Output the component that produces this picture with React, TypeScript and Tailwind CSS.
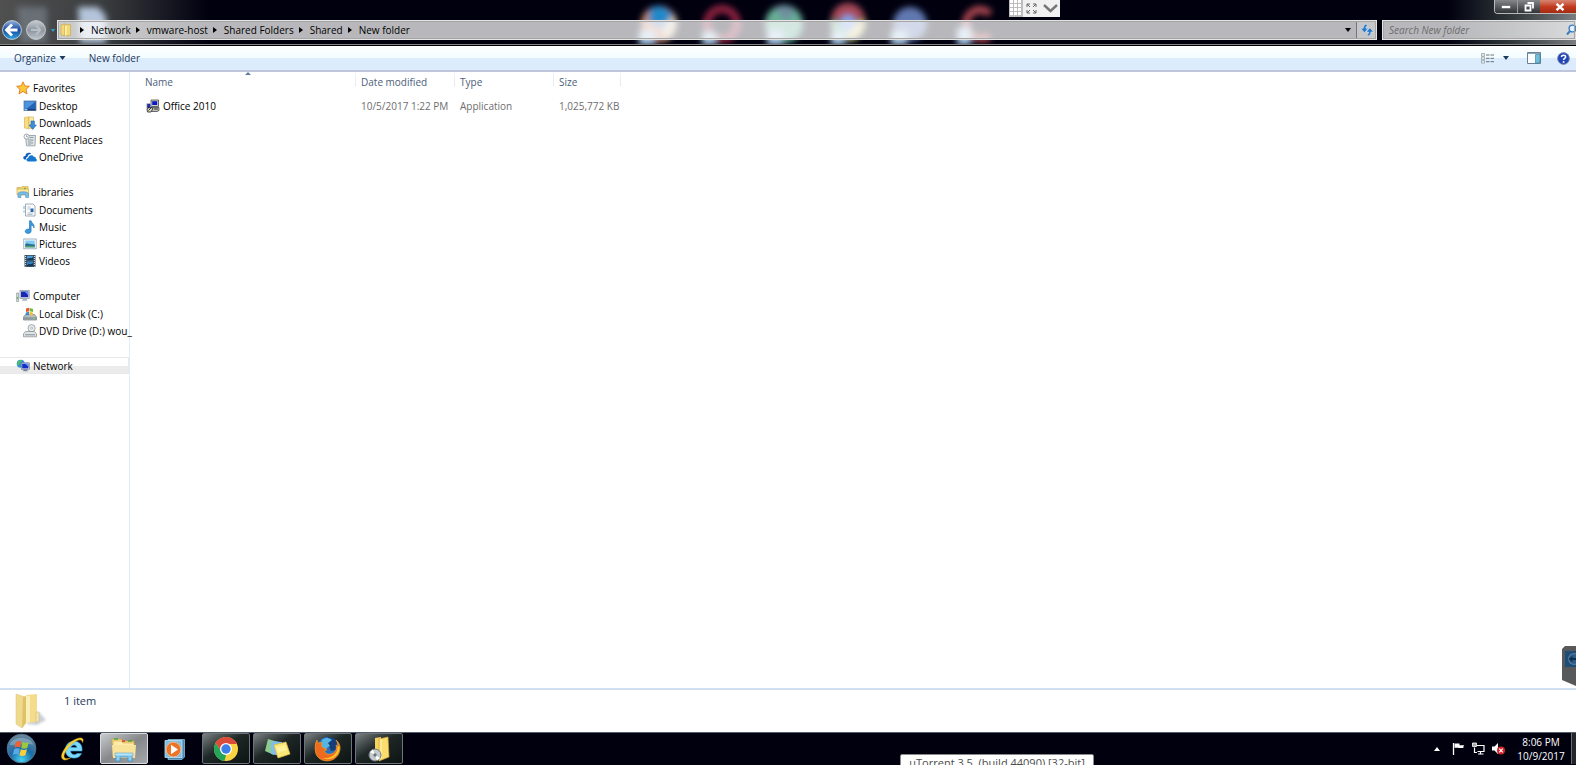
import React from "react";

type IconName =
  | "star" | "desktop" | "downloads" | "recent" | "onedrive" | "libraries" | "documents"
  | "music" | "pictures" | "videos" | "computer" | "disk" | "dvd" | "network";

const drawings: Record<IconName, React.ReactNode> = {
  star: (
    <path d="M7 .8 8.9 4.9 13.4 5.3 10 8.3 11 12.9 7 10.4 3 12.9 4 8.3 .6 5.3 5.1 4.9Z" fill="#ffc83a" stroke="#e07a1c" strokeWidth=".9" strokeLinejoin="round" />
  ),
  desktop: (
    <g>
      <rect x="1" y="2" width="12" height="9.5" fill="#2563b4" stroke="#5f7e9e" strokeWidth=".8" />
      <path d="M1.4 2.4h11.2L4 9.5 1.4 10Z" fill="#4d94dc" />
      <path d="M1.4 10h11.2v1.4H1.4Z" fill="#1b3f78" />
      <path d="M1.4 10h3v1.4h-3Z" fill="#8fd0e8" />
    </g>
  ),
  downloads: (
    <g>
      <path d="M1.500 1.500 6 .8v12L1.500 12Z" fill="#f7dd7c" stroke="#d3ab45" strokeWidth=".6" />
      <path d="M6 1h4.500v11.300H6Z" fill="#fbebaa" stroke="#d3ab45" strokeWidth=".6" />
      <path d="M8 5h3.400v4h2L9.700 13.400 6 9h2Z" fill="#3b8fd6" stroke="#2566ad" strokeWidth=".6" />
    </g>
  ),
  recent: (
    <g>
      <path d="M2.500 2.500H12.500l-.5 10.300H3.500Z" fill="#dde4e7" stroke="#8c979e" strokeWidth=".8" />
      <circle cx="3.600" cy="3.600" r="2.600" fill="#f6f9fa" stroke="#8c979e" strokeWidth=".8" />
      <path d="M3.600 2.200v1.600h1.200M7 4.500h3.500M5 7h5.500M5 9h3M9 8.500v2.500M5 11h3" stroke="#7b8992" strokeWidth=".8" fill="none" />
    </g>
  ),
  onedrive: (
    <g>
      <path d="M1.500 9.500C-.6 8.800.1 5.800 2.400 5.900 2.600 2.900 6.600 1.800 8.400 4.100 6 3.900 4.700 5.300 4.500 7 3 7.200 2.700 8.700 3.300 9.600Z" fill="#0f5fb8" />
      <path d="M5 11.500C2.800 11.300 3 8.200 5.200 8.100 5.300 5.100 9.400 4.100 10.700 6.700 12.300 6.300 13.100 7.700 12.700 8.700 14.500 9.200 14.100 11.500 12.500 11.500Z" fill="#1677d2" />
    </g>
  ),
  libraries: (
    <g>
      <path d="M1 2.500h4l1-1h6v3H1Z" fill="#f5d66d" stroke="#c8a446" strokeWidth=".6" />
      <path d="M1 4h11.500v6H1Z" fill="#fbe89a" stroke="#c8a446" strokeWidth=".6" />
      <path d="M2 12.500V8.500C2.300 6.300 11.600 6.300 12.500 8.500v4h-2.800V9.600H4.900v2.900Z" fill="#77bfe8" stroke="#4b8fc0" strokeWidth=".6" />
      <circle cx="9" cy="3.500" r=".8" fill="#4b9c4b" />
    </g>
  ),
  documents: (
    <g>
      <path d="M2.500 1H10l2 2v10H2.500Z" fill="#fafcfe" stroke="#8997a5" strokeWidth=".8" />
      <path d="M4.500 4h3M4.500 6h2.500M4.500 10h5.500M4.500 11.500h5" stroke="#9aa9b7" strokeWidth=".7" />
      <path d="M7.500 5.500h3V9h-3Z" fill="#2867b0" />
      <path d="M1 3v3M1 7.500v2" stroke="#6296c6" strokeWidth=".8" />
    </g>
  ),
  music: (
    <path d="M6.500.8h1.600C8.600 3.300 12 4.200 11 8c-.4-2-1.500-2.700-2.900-3.100V11c0 1.700-1.300 2.400-3 2.400S2.200 12.600 2.200 11.300s1.500-2.600 4.300-2.200Z" fill="#3a9be0" stroke="#1b69b0" strokeWidth=".6" />
  ),
  pictures: (
    <g>
      <rect x=".8" y="2" width="12.400" height="9.800" fill="#fafcff" stroke="#8ea0b1" strokeWidth=".8" />
      <rect x="2.300" y="3.500" width="9.400" height="6.800" fill="#82c9ef" />
      <path d="M2.300 7c3-1.500 5 1 9.400.3v3H2.300Z" fill="#246c9a" />
      <path d="M2.300 9c3 0 5-.6 9.400.4v.9H2.300Z" fill="#54a05e" />
    </g>
  ),
  videos: (
    <g>
      <rect x="1.500" y="1" width="11" height="12" fill="#3d4d5c" />
      <path d="M2.600 2v10.500M11.400 2v10.500" stroke="#dbe4ea" strokeWidth="1" strokeDasharray="1 1" />
      <rect x="4" y="1.800" width="6" height="4.700" fill="#4b9ed8" />
      <rect x="4" y="7.500" width="6" height="4.700" fill="#3482bd" />
      <path d="M4 5c2-2 4 0 6-2v3.500H4ZM4 11c2-2 4 0 6-2v3.200H4Z" fill="#153a5b" />
    </g>
  ),
  computer: (
    <g>
      <path d="M.6 4h2v8.500h-2Z" fill="#d6dde0" stroke="#7c8a8d" strokeWidth=".6" />
      <path d="M1.600 8v2" stroke="#57b04d" strokeWidth="1" />
      <rect x="4" y="1.500" width="9.200" height="7.800" fill="#d8dee6" stroke="#75808f" strokeWidth=".6" />
      <rect x="5" y="2.500" width="7.200" height="5.700" fill="#1828b4" />
      <path d="M8.500 2.500h3.700v3.700Z" fill="#6f90f0" />
      <path d="M7.300 9.300h2.800l1.500 2.400H5.800Z" fill="#aab2bc" />
    </g>
  ),
  disk: (
    <g>
      <path d="M2.500 7.500h9l2 2.500v3H.5v-3Z" fill="#b8bfc4" stroke="#737b80" strokeWidth=".7" />
      <path d="M.8 10.200h12.400v2.500H.8Z" fill="#8f999f" />
      <path d="M10 11.500h2" stroke="#5be05b" strokeWidth="1" />
      <path d="M3 1.500 6.200.8v3.400L3 5Z" fill="#e8542a" />
      <path d="M6.700.9 10 2v3L6.700 4.200Z" fill="#6fb83c" />
      <path d="M2.800 5.500 6 4.700V8L2.800 8.500Z" fill="#3a8ad4" />
      <path d="M6.500 4.700 9.800 5.500v3L6.500 8Z" fill="#f6c02d" />
    </g>
  ),
  dvd: (
    <g>
      <circle cx="8.600" cy="4.200" r="3.600" fill="#e9eef0" stroke="#8b9499" strokeWidth=".8" />
      <circle cx="8.600" cy="4.200" r="1" fill="#fff" stroke="#8b9499" strokeWidth=".6" />
      <path d="M2.500 7.500h9l2 2.300v3H.5v-3Z" fill="#dfe3e5" stroke="#7d868b" strokeWidth=".7" />
      <path d="M2 10.800h10" stroke="#7d868b" strokeWidth=".9" />
    </g>
  ),
  network: (
    <g>
      <circle cx="4.700" cy="4.700" r="4" fill="#2f92d8" />
      <path d="M1.500 2.700C3 .8 5 .6 6 1.300 5.500 3 4 3 3.500 5 3 7 1.700 6.500 1 5.500Z" fill="#50bb68" />
      <rect x="5.300" y="3.800" width="8" height="6.500" fill="#d4dae6" stroke="#6a7487" strokeWidth=".6" />
      <rect x="6.200" y="4.700" width="6.200" height="4.700" fill="#1230c4" />
      <path d="M9 4.700h3.400v3Z" fill="#6a9bf5" />
      <path d="M8 10.300h2.700l1.300 2H6.800Z" fill="#7d8796" />
    </g>
  ),
};

function Icon({ name }: { name: IconName }) {
  return (
    <svg viewBox="0 0 14 14" className="size-[14px] shrink-0" aria-hidden="true">
      {drawings[name]}
    </svg>
  );
}

type NavGroup = { label: string; icon: IconName; items: { label: string; icon: IconName }[] };

const groups: NavGroup[] = [
  {
    label: "Favorites",
    icon: "star",
    items: [
      { label: "Desktop", icon: "desktop" },
      { label: "Downloads", icon: "downloads" },
      { label: "Recent Places", icon: "recent" },
      { label: "OneDrive", icon: "onedrive" },
    ],
  },
  {
    label: "Libraries",
    icon: "libraries",
    items: [
      { label: "Documents", icon: "documents" },
      { label: "Music", icon: "music" },
      { label: "Pictures", icon: "pictures" },
      { label: "Videos", icon: "videos" },
    ],
  },
  {
    label: "Computer",
    icon: "computer",
    items: [
      { label: "Local Disk (C:)", icon: "disk" },
      { label: "DVD Drive (D:) wou_", icon: "dvd" },
    ],
  },
];

function Caret({ className }: { className: string }) {
  return (
    <svg viewBox="0 0 6 4" className={className} aria-hidden="true">
      <path d="M0 0h6L3 4Z" fill="currentColor" />
    </svg>
  );
}

function Glass() {
  return (
    <div className="pointer-events-none absolute inset-0 overflow-hidden" aria-hidden="true">
      <div className="absolute inset-y-0 left-0 w-52 bg-linear-to-r from-[#505050] via-[#3a3d3f] to-transparent" />
      <div className="absolute inset-y-0 right-0 w-32 bg-linear-to-l from-[#7b7e80] via-[#30383a] to-transparent" />
      <svg className="absolute left-0 top-0 h-[45px] w-[1100px]" viewBox="0 0 1100 45">
        <defs>
          <filter id="soft" x="-20%" y="-20%" width="140%" height="140%">
            <feGaussianBlur stdDeviation="3" />
          </filter>
        </defs>
        <g filter="url(#soft)">
          <path d="M17 7h30v36H20Z" fill="#8793a0" opacity=".5" />
          <path d="M78 7h20l8 9v27H80Z" fill="#b4c4da" />
          <circle cx="659" cy="24" r="18" fill="#c98a6a" />
          <path d="M650 8c12-6 24 2 24 14l-12 6-14-6Z" fill="#2389c9" />
          <path d="M674 14c6 10 0 22-8 26l-4-10Z" fill="#d8c9ae" />
          <circle cx="722" cy="24" r="15" fill="none" stroke="#902040" strokeWidth="8" />
          <circle cx="784" cy="24" r="19" fill="#66ad94" />
          <path d="M775 8c8-5 18-2 20 5l-10 8Z" fill="#6f8da0" />
          <path d="M831 20a17 17 0 0 1 34 0Z" fill="#a84a58" />
          <path d="M865 20c2 10-6 21-17 21V24Z" fill="#ded58c" />
          <path d="M831 20c-2 10 6 21 17 21V24Z" fill="#6fb591" />
          <circle cx="848" cy="23" r="8" fill="#7fa3e8" />
          <circle cx="910" cy="24" r="17" fill="#6078b0" />
          <path d="M990 14a14 14 0 0 0-24 10c0 12 14 18 24 12" fill="none" stroke="#a84450" strokeWidth="8" />
          <path d="M639 31h16v14h-16ZM702 33h14v12h-14ZM767 30h16v15h-16ZM831 32h14v13h-14ZM891 31h16v14h-16ZM957 28h14v17h-14Z" fill="#a9c8e4" />
        </g>
      </svg>
    </div>
  );
}

function TitleArea() {
  const crumbs = ["Network", "vmware-host", "Shared Folders", "Shared", "New folder"];
  return (
    <header className="relative h-[46px] shrink-0 border-b border-black bg-[#00000f]">
      <Glass />
      <div className="absolute right-0 top-0 flex h-[14px] w-[82px] overflow-hidden rounded-bl-[4px] border-b border-l border-[#b7b9ba]">
        <button aria-label="Minimize" className="flex flex-1 items-center justify-center border-r border-[#9a9c9e] bg-linear-to-b from-[#85888b] to-[#303437]">
          <svg viewBox="0 0 10 4" className="h-1 w-[10px]"><path d="M.5.5h9v3h-9Z" fill="#fff" stroke="#444" strokeWidth=".5" /></svg>
        </button>
        <button aria-label="Restore" className="flex flex-1 items-center justify-center bg-linear-to-b from-[#85888b] to-[#303437]">
          <svg viewBox="0 0 10 10" className="size-[10px]"><path d="M3.500 1h5.500v5.500M1.500 3.500h5v5h-5Z" fill="none" stroke="#fff" strokeWidth="1.800" /></svg>
        </button>
        <button aria-label="Close" className="flex w-9 items-center justify-center bg-linear-to-b from-[#d68472] via-[#c23c20] to-[#a52a12] pl-1">
          <svg viewBox="0 0 10 8" className="h-2 w-[10px]"><path d="m1.500.8 7 6.400m0-6.400-7 6.400" stroke="#fff" strokeWidth="2.400" /></svg>
        </button>
      </div>
      <div className="absolute left-[64%] top-0 flex h-[17px] w-[51px] items-center bg-[#f1f1f1]">
        <svg viewBox="0 0 14 17" className="h-[17px] w-[14px]" aria-hidden="true">
          <path d="M0 0h14v17H0Z" fill="#bdbdbd" />
          <path d="M1 0h3v3H1Zm4 0h3v3H5Zm4 0h3v3H9ZM1 4h3v3H1Zm4 0h3v3H5Zm4 0h3v3H9ZM1 8h3v3H1Zm4 0h3v3H5Zm4 0h3v3H9ZM1 12h3v3H1Zm4 0h3v3H5Zm4 0h3v3H9Z" fill="#fff" />
        </svg>
        <button aria-label="Full screen" className="flex w-[18px] justify-center">
          <svg viewBox="0 0 11 11" className="size-[11px]"><path d="M1 4V1h3M1 1l3 3M7 1h3v3M10 1 7 4M1 7v3h3M1 10l3-3M10 7v3H7M10 10 7 7" fill="none" stroke="#666" /></svg>
        </button>
        <button aria-label="Expand" className="flex flex-1 justify-center">
          <svg viewBox="0 0 15 9" className="h-[9px] w-[15px]"><path d="m1 1 6.500 6L14 1" fill="none" stroke="#777" strokeWidth="2.400" /></svg>
        </button>
      </div>
      <div className="relative flex h-full items-end border-b border-[#83878a] pb-1">
        <div className="flex h-5 w-[57px] shrink-0 items-center gap-[2px] pl-[2px]">
          <button aria-label="Back" className="size-5">
            <svg viewBox="0 0 20 20" className="size-5">
              <defs><linearGradient id="back" x2="0" y2="1"><stop stopColor="#8fb2dc" /><stop offset=".5" stopColor="#1748a0" /><stop offset="1" stopColor="#2ea6e0" /></linearGradient></defs>
              <circle cx="10" cy="10" r="9.400" fill="url(#back)" stroke="#bccbd9" />
              <path d="M10 4.500 4.500 10l5.500 5.500M5 10h10.500" fill="none" stroke="#fff" strokeWidth="2.800" />
            </svg>
          </button>
          <button aria-label="Forward" className="ml-[2px] size-5">
            <svg viewBox="0 0 20 20" className="size-5">
              <defs><linearGradient id="fwd" x2="0" y2="1"><stop stopColor="#c9cdd1" /><stop offset=".5" stopColor="#8b939c" /><stop offset="1" stopColor="#c0c5cb" /></linearGradient></defs>
              <circle cx="10" cy="10" r="9.400" fill="url(#fwd)" stroke="#c6cbd0" />
              <path d="m10 5.500 4.500 4.500-4.500 4.500M14 10H5" fill="none" stroke="#b9bfc6" strokeWidth="1.800" />
            </svg>
          </button>
          <button aria-label="Recent pages" className="pl-[2px] text-[#2c9fd0]"><Caret className="h-[3px] w-[6px]" /></button>
        </div>
        <div className="flex h-5 min-w-0 flex-1 items-center border border-[#e4e4e4] bg-white/72 outline-1 -outline-offset-2 outline-[#a5a5a5]">
          <svg viewBox="0 0 12 14" className="ml-[2px] h-[14px] w-3 shrink-0" aria-hidden="true">
            <path d="M1 2 5 .8v12L1 11.800ZM5 2l5.500-.5v11L5 12.800Z" fill="#f3d873" stroke="#c6a542" strokeWidth=".6" />
            <path d="M5 2.500h1.500v10H5Z" fill="#fff3bd" />
          </svg>
          <nav aria-label="Address" className="ml-2 flex items-center">
            {crumbs.map((c) => (
              <button key={c} className="flex h-4 items-center whitespace-nowrap pr-[5px]">
                <svg viewBox="0 0 4 6" className="mr-[7px] h-[6px] w-1" aria-hidden="true"><path d="M0 0v6l4-3Z" fill="#000" /></svg>
                {c}
              </button>
            ))}
          </nav>
          <button aria-label="Previous locations" className="ml-auto mr-[5px]"><Caret className="h-1 w-[6px]" /></button>
          <button aria-label="Refresh" className="flex h-full w-5 items-center justify-center border-l border-[#777] bg-white/20">
            <svg viewBox="0 0 12 12" className="size-[14px]">
              <path d="M6 1C3.600 1 2.800 2.600 2.800 4.500H.6l3.200 3.800L7 4.500H5c0-1.200.3-1.900 1.300-2.100Z" fill="#2779c8" stroke="#e9f2fa" strokeWidth=".4" />
              <path d="M6.300 11.200c2.200 0 3.100-1.600 3.100-3.500h2.200L8.500 4 5.300 7.700h2.100c0 1.300-.4 1.900-1.300 2.100Z" fill="#2779c8" stroke="#e9f2fa" strokeWidth=".4" />
            </svg>
          </button>
        </div>
        <label className="ml-[5px] flex h-5 w-[194px] shrink-0 items-center overflow-hidden border border-r-0 border-[#e4e4e4] bg-white/72 outline-1 -outline-offset-2 outline-[#a5a5a5]">
          <span className="sr-only">Search New folder</span>
          <input type="search" placeholder="Search New folder" className="min-w-0 flex-1 bg-transparent pl-[6px] italic outline-none placeholder:text-[#6d6d6d]" />
          <svg viewBox="0 0 10 12" className="h-3 w-[10px] shrink-0" aria-hidden="true">
            <circle cx="6.500" cy="4.500" r="3.400" fill="#e5f0fa" stroke="#3a7cc0" strokeWidth="1.400" /><path d="M4 7 1 10.500" stroke="#3a7cc0" strokeWidth="2" />
          </svg>
        </label>
      </div>
    </header>
  );
}

function Toolbar() {
  return (
    <div className="flex h-[26px] shrink-0 items-center border-b-2 border-[#bfc5dc] bg-linear-to-b from-white from-0% via-[#f2fcff] via-50% to-[#dcecfd] to-52% pl-[14px] pr-[6px] text-[#1e395b]">
      <button className="flex items-center gap-[3px]">Organize<Caret className="h-1 w-[7px]" /></button>
      <button className="ml-[23px]">New folder</button>
      <button aria-label="Change your view" className="ml-auto flex items-center gap-[9px]">
        <svg viewBox="0 0 13 11" className="h-[11px] w-[13px]">
          <path d="M.5.500h3v2.800h-3Zm0 3.400h3v2.800h-3Zm0 3.400h3v2.800h-3Z" fill="#e6ebee" stroke="#99a2a8" strokeWidth=".8" />
          <path d="M5 2h3.500M9.500 2H13M5 5.300h3.500M9.500 5.300H13M5 8.700h3.500M9.500 8.700H13" stroke="#68747d" />
        </svg>
        <Caret className="h-1 w-[6px]" />
      </button>
      <button aria-label="Show the preview pane" className="ml-[18px]">
        <svg viewBox="0 0 14 12" className="h-3 w-[14px]">
          <path d="M.5.5h13v11H.5Z" fill="#fdfeff" stroke="#6b7f94" /><path d="M1 1.500h12" stroke="#8ca5bd" /><path d="M8.500 2.500H13V11H8.500Z" fill="#6fbfda" stroke="#4186a6" strokeWidth=".7" />
        </svg>
      </button>
      <button aria-label="Get help" className="ml-4">
        <svg viewBox="0 0 13 13" className="size-[13px]">
          <circle cx="6.500" cy="6.500" r="5.900" fill="#2346b6" stroke="#8290b4" />
          <path d="M4.500 5C4.500 2.500 8.700 2.600 8.600 5 8.500 6.400 6.600 6.300 6.600 8" fill="none" stroke="#fff" strokeWidth="1.500" /><circle cx="6.600" cy="9.900" r=".95" fill="#fff" />
        </svg>
      </button>
    </div>
  );
}

function Sidebar() {
  return (
    <nav aria-label="Folders" className="w-[130px] shrink-0 border-r border-[#e3edf8] pt-[7px] text-black">
      {groups.map((g) => (
        <ul key={g.label} className="mb-[18px]">
          <li>
            <a href="#" className="flex h-[18px] items-center gap-[3px] whitespace-nowrap pl-4"><Icon name={g.icon} />{g.label}</a>
          </li>
          {g.items.map((i) => (
            <li key={i.label}>
              <a href="#" className="flex h-[17px] items-center gap-[2px] whitespace-nowrap pl-[23px]"><Icon name={i.icon} />{i.label}</a>
            </li>
          ))}
        </ul>
      ))}
      <a href="#" aria-current="page" className="flex h-[17px] items-center gap-[3px] border border-l-0 border-[#e8e8e8] bg-linear-to-b from-white from-50% to-[#ebebeb] to-50% pl-4">
        <Icon name="network" />Network
      </a>
    </nav>
  );
}

function Files() {
  const divider = "relative pl-[5px] text-left font-normal after:absolute after:right-0 after:top-0 after:h-[14px] after:w-px after:bg-linear-to-b after:from-[#f2f6fb] after:to-[#dfe8f3]";
  return (
    <main className="min-w-0 flex-1 overflow-hidden">
      <table className="w-[491px] table-fixed border-collapse">
        <colgroup>
          <col className="w-[226px]" />
          <col className="w-[99px]" />
          <col className="w-[99px]" />
          <col className="w-[67px]" />
        </colgroup>
        <thead>
          <tr className="h-5 text-[#4c607a]">
            <th className={divider}>
              <span className="pl-[10px]">Name</span>
              <svg viewBox="0 0 6 3" className="absolute left-[115px] top-0 h-[3px] w-[6px]" aria-hidden="true"><path d="M0 3 3 0l3 3Z" fill="#5b7d99" /></svg>
            </th>
            <th className={divider}>Date modified</th>
            <th className={divider}>Type</th>
            <th className={divider}>Size</th>
          </tr>
        </thead>
        <tbody>
          <tr className="h-7 text-[#6d6d6d]">
            <td className="pl-4">
              <span className="flex items-center gap-[3px] text-black">
                <svg viewBox="0 0 14 14" className="size-[14px]" aria-hidden="true">
                  <path d="M5 1h7.500v6.500H5Z" fill="#d0d0c8" stroke="#333" strokeWidth=".7" />
                  <path d="M6.200 2.200h5V6h-5Z" fill="#0b18c8" />
                  <path d="M5.500 8.500H13v3l-2 1H5.500Z" fill="#c4c4bc" stroke="#333" strokeWidth=".7" />
                  <path d="M.8 4.500h4v5h-4Z" fill="#1b2ca0" stroke="#c9c9c9" strokeWidth=".7" />
                  <path d="M1 10c2-2 4-2 6-.5L5 13H1.500Z" fill="#d9d6c8" stroke="#222" strokeWidth=".8" />
                  <path d="m2.500 11.500 3-3M8 10h4" stroke="#222" strokeWidth=".9" />
                </svg>
                Office 2010
              </span>
            </td>
            <td className="whitespace-nowrap pl-[5px]">10/5/2017 1:22 PM</td>
            <td className="pl-[5px]">Application</td>
            <td className="whitespace-nowrap pl-[5px]">1,025,772 KB</td>
          </tr>
        </tbody>
      </table>
    </main>
  );
}

function TaskButton({ label, active, framed = true, children }: { label: string; active?: boolean; framed?: boolean; children: React.ReactNode }) {
  const look = active
    ? "border border-[#d9dcde] bg-linear-to-br from-[#c9ccce] via-[#85888b] to-[#a5a8aa]"
    : framed
      ? "border border-[#6e7578] bg-linear-to-br from-[#7c8284] from-0% via-[#1e2626] via-45% to-[#0c1414]"
      : "";
  return (
    <button aria-label={label} className={"flex h-[31px] w-[48px] items-center justify-center rounded-[2px] " + look}>
      {children}
    </button>
  );
}

function Taskbar() {
  return (
    <footer className="flex h-[33px] shrink-0 items-start overflow-hidden border-t border-[#536069] bg-[#00000f] text-white">
      <button aria-label="Start" className="ml-[6px]">
        <svg viewBox="0 0 32 32" className="size-[31px]">
          <defs><radialGradient id="orb" cx=".5" cy=".9" r=".9"><stop stopColor="#45d2f2" /><stop offset=".45" stopColor="#1c6ca8" /><stop offset="1" stopColor="#71899a" /></radialGradient></defs>
          <circle cx="16" cy="16" r="14.800" fill="url(#orb)" stroke="#54748b" />
          <path d="M4 12C7 3 25 3 28 12 20 10 12 14 4 12Z" fill="#fff" opacity=".25" />
          <path d="M10 10c2-2 4-2 6-1l-1.300 6c-2-1-4-1-6 .5Z" fill="#ee6133" />
          <path d="M17 9.300c2 1 4 1.200 6.500 0L22 15.500c-2.300 1-4.300 1-6.300 0Z" fill="#9aca3c" />
          <path d="M8.300 16.700c2-1.300 4-1.400 6-.4L13 22.500c-2-1-4-1-6 .3Z" fill="#59a8e8" />
          <path d="M15.400 16.700c2 1 4 1 6.300 0L20 23c-2 1-4 1-6.200 0Z" fill="#fbcf3a" />
        </svg>
      </button>
      <div className="ml-3 flex items-center gap-[3px]">
        <TaskButton label="Internet Explorer" framed={false}>
          <svg viewBox="0 0 28 28" className="size-7">
            <path d="M22.500 18.500C21 22 17.500 23.500 14 23 8.500 22.500 5.500 18 6.500 13 7.500 8.500 11 6 15.500 6.200 21 6.500 23.500 10.500 23 16H11.500C12 20 16.500 20.500 18 18.500ZM11.800 12.500H18C17.500 9 12.800 9 11.800 12.500Z" fill="#7dd9fa" stroke="#35a7e0" strokeWidth=".6" />
            <path d="M23.500 7.500C26.500 1.500 19 1.500 12 7 5 13 .5 20.500 3.500 24c2 2 5.500.5 8-1C3 25.500 3.500 20 9 13 14 6.500 23 1.500 23.500 7.500Z" fill="#fbd52f" stroke="#dca216" strokeWidth=".5" />
          </svg>
        </TaskButton>
        <TaskButton label="File Explorer" active>
          <svg viewBox="0 0 28 26" className="h-[26px] w-7">
            <path d="M2 3h9l2 2h11v3H2Z" fill="#f3d67a" stroke="#c79b3b" strokeWidth=".7" />
            <path d="M3 5h8l2 2h11v14H3Z" fill="#fcebaa" stroke="#d9b85c" strokeWidth=".7" />
            <path d="M2 9h24l-1 13H3Z" fill="#f9e29a" />
            <path d="M4 3h4M18 5h4" stroke="#48a34a" strokeWidth="1.500" /><path d="M12 5.200h3" stroke="#d74a3c" strokeWidth="1.500" />
            <path d="M6 25v-5l2-2h12l2 2v5h-4v-4h-8v4Z" fill="#8cd1f4" stroke="#3f91c4" strokeWidth=".8" />
            <path d="M5 17h18v3H5Z" fill="#b5e3f8" stroke="#5ba8d3" strokeWidth=".6" />
          </svg>
        </TaskButton>
        <TaskButton label="Windows Media Player" framed={false}>
          <svg viewBox="0 0 24 24" className="size-6">
            <path d="M5 2.500h16.500V20L19 22.500H5Z" fill="#4689b6" stroke="#9bcde8" strokeWidth=".7" />
            <path d="M2 3.500h17v17H2Z" fill="#82bee0" stroke="#c3e3f3" strokeWidth=".8" />
            <circle cx="10.500" cy="12.500" r="7.400" fill="#ea7428" stroke="#fac398" strokeWidth=".8" />
            <path d="M8 7.800v9.400l7-4.700Z" fill="#fff" />
          </svg>
        </TaskButton>
        <TaskButton label="Google Chrome">
          <svg viewBox="0 0 26 26" className="size-[26px]">
            <circle cx="13" cy="13" r="12" fill="#fbd23f" />
            <path d="M2.600 7A12 12 0 0 1 23.900 8H13L8.200 15.500Z" fill="#dc4a3b" />
            <path d="M2.600 7 8.500 16 13 19l-1.500 6A12 12 0 0 1 2.600 7Z" fill="#25a45b" />
            <circle cx="13" cy="13" r="6" fill="#fff" /><circle cx="13" cy="13" r="4.700" fill="#3d7fe8" />
          </svg>
        </TaskButton>
        <TaskButton label="Sticky Notes">
          <svg viewBox="0 0 28 24" className="h-6 w-7">
            <path d="m5 2 10 3-4 13-9-4Z" fill="#8ccd8c" /><path d="m8 4 11 1-1 14-10-2Z" fill="#80bde8" />
            <path d="m11 8 12-3 4 12-12 4Z" fill="#fbe778" stroke="#e1bd42" strokeWidth=".7" />
            <path d="m13 10 9-2 2 5-9 3Z" fill="#fff5a8" opacity=".7" />
          </svg>
        </TaskButton>
        <TaskButton label="Firefox">
          <svg viewBox="0 0 28 28" className="size-7">
            <circle cx="14" cy="13" r="11" fill="#2871bf" />
            <path d="M14 2c8-.5 11 7 8 13l-5 1-4-9Z" fill="#173d78" /><path d="M8 5c4-3 8-2 10 0l-4 3 2 3-5 3-4-3Z" fill="#55b6e3" />
            <path d="M3 5c0 2 1 3 1 3L8 7.500c-1 3 0 5 2 6l3 .5c-1 2-3 2-3 2 2 5 10 4 12-1 1-3 0-5 0-5 2 1 2 2 2 2 .5-3-1-6-2-7 5 4 5 10 2 15-5 8-18 8-22-1C.500 14 1 8 3 5Z" fill="#ed6a1f" stroke="#f5a325" strokeWidth=".7" />
            <path d="M25.500 11c1 10-9 16-17 12 9 1 15-4 15-11Z" fill="#fbc52e" />
          </svg>
        </TaskButton>
        <TaskButton label="Disc folder">
          <svg viewBox="0 0 26 28" className="h-7 w-[26px]">
            <path d="m9 3 6-1v23l-6-2Z" fill="#f6d260" /><path d="M13 4 22 2l1 20-10 4Z" fill="#fbdc6c" stroke="#d4a63a" strokeWidth=".7" />
            <path d="M15 4v20" stroke="#fff0a8" strokeWidth="1.500" />
            <circle cx="9" cy="20" r="6" fill="#c4cbcd" stroke="#727b80" /><path d="m9 20-5-3 3-2.500ZM9 20l5 3-3 2.500Z" fill="#fff" /><circle cx="9" cy="20" r="1.700" fill="#69777d" />
          </svg>
        </TaskButton>
      </div>
      <div className="ml-auto flex items-center">
        <button aria-label="Show hidden icons"><svg viewBox="0 0 6 4" className="h-1 w-[6px]"><path d="M0 4h6L3 0Z" fill="#fff" /></svg></button>
        <button aria-label="Action Center" className="ml-3">
          <svg viewBox="0 0 13 13" className="size-[13px]"><path d="M1.500 1v12" stroke="#fff" strokeWidth="1.300" /><path d="M2.500 1.500h5v1.800h4.800l-1.300 2 1 .700H6.500V5.700h-4Z" fill="#fff" /></svg>
        </button>
        <button aria-label="Network status" className="ml-[7px]">
          <svg viewBox="0 0 13 13" className="size-[13px]"><path d="M5 3.500h7v6H5.500M2.500 5.500v5H5M8.500 9.500v2M6 12h5.500" fill="none" stroke="#fff" strokeWidth="1.200" /><path d="M.5 1h4v3.500h-4Z" fill="#aaa" stroke="#fff" strokeWidth=".8" /></svg>
        </button>
        <button aria-label="Volume muted" className="ml-[7px]">
          <svg viewBox="0 0 13 13" className="size-[13px]"><path d="M0 4.500h2.500L6 1v11L2.500 8.500H0Z" fill="#fff" /><circle cx="9" cy="8.500" r="4" fill="#d52228" /><path d="m7.200 6.700 3.600 3.600m0-3.600-3.600 3.600" stroke="#fff" strokeWidth="1.200" /></svg>
        </button>
        <time className="ml-3 flex w-[48px] flex-col items-center whitespace-nowrap leading-[14px]"><span>8:06 PM</span><span>10/9/2017</span></time>
        <button aria-label="Show desktop" className="ml-[6px] h-[31px] w-[5px] border-l border-[#6a6d70] bg-[#23262a]" />
      </div>
    </footer>
  );
}

export default function App() {
  return (
    <div className="relative flex h-screen flex-col overflow-hidden bg-white font-['Open_Sans','Noto_Sans',sans-serif] text-[10px] leading-[14px] text-black">
      <TitleArea />
      <Toolbar />
      <div className="flex min-h-0 flex-1">
        <Sidebar />
        <Files />
      </div>
      <section aria-label="Details" className="flex h-11 shrink-0 items-start border-t-2 border-[#d0e0f3] bg-white pl-[14px]">
        <svg viewBox="0 0 34 40" className="mt-[2px] h-10 w-[34px]" aria-hidden="true">
          <defs><filter id="shade"><feGaussianBlur stdDeviation="1.200" /></filter></defs>
          <path d="M12 32 25 20l7 8-9 5Z" fill="#a9b0c0" opacity=".6" filter="url(#shade)" />
          <path d="M12 3 23 2v28l-11 1Z" fill="#f3dc8c" />
          <path d="M12 4h4v26l-4 1Z" fill="#fbeeb8" />
          <path d="M2 2l9 3v27l-3 4-6-4Z" fill="#efd98c" stroke="#dec16c" strokeWidth=".5" />
          <path d="M9 5l3-1v27l-4 5Z" fill="#e0c269" />
          <path d="M22 20h3v9l-3 2Z" fill="#f5e6ac" stroke="#c5b77e" strokeWidth=".5" />
        </svg>
        <p className="ml-4 mt-1 text-[11px] text-[#1e395b]">1 item</p>
      </section>
      <Taskbar />
      <button aria-label="Show remote session panel" className="absolute bottom-[79px] right-0">
        <svg viewBox="0 0 14 40" className="h-10 w-[14px]">
          <path d="M3 0h11v40L0 34V3Z" fill="#58595b" /><path d="M3 5h11v16H3Z" fill="#1d4e78" />
          <circle cx="12" cy="13" r="6" fill="#58799a" /><circle cx="12" cy="13" r="4.800" fill="#2d5c84" /><path d="m6.500 13 4-3v2h4v2h-4v2Z" fill="#0d2f4e" />
        </svg>
      </button>
      <div role="tooltip" className="absolute left-[57%] top-full -mt-[11px] ml-[2px] h-5 whitespace-nowrap rounded-[2px] border border-[#8a8a8a] bg-white px-2 text-[11px] leading-[16px] text-[#4c4c4c]">
        uTorrent 3.5&nbsp; (build 44090) [32-bit]
      </div>
    </div>
  );
}
